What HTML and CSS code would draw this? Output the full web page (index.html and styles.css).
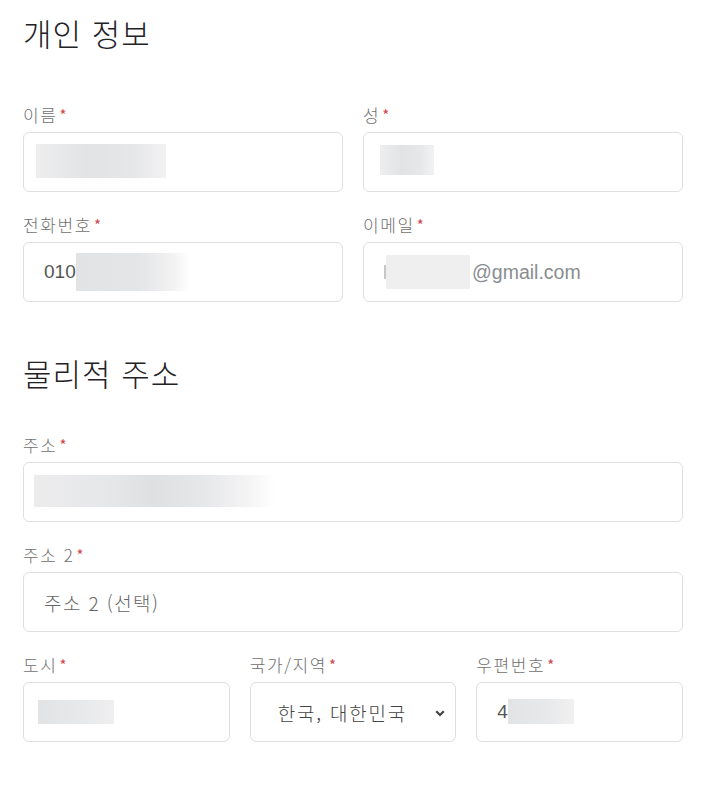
FILE: index.html
```html
<!DOCTYPE html>
<html lang="ko">
<head>
    <meta charset="UTF-8">
    <title>개인 정보</title>
    <link rel="stylesheet" href="styles.css">
</head>
<body>
    <div class="form">
        <h2 class="title first">개인 정보</h2>
        <div class="row two">
            <div class="field">
                <label>이름<span class="req">*</span></label>
                <div class="input"><span class="blur b-name"></span></div>
            </div>
            <div class="field">
                <label>성<span class="req">*</span></label>
                <div class="input"><span class="blur b-last"></span></div>
            </div>
        </div>
        <div class="row two">
            <div class="field">
                <label>전화번호<span class="req">*</span></label>
                <div class="input"><span class="val">010</span><span class="blur b-phone"></span></div>
            </div>
            <div class="field">
                <label>이메일<span class="req">*</span></label>
                <div class="input"><span class="mark"></span><span class="blur b-mail"></span><span class="val mail">@gmail.com</span></div>
            </div>
        </div>

        <h2 class="title second">물리적 주소</h2>
        <div class="row">
            <div class="field">
                <label>주소<span class="req">*</span></label>
                <div class="input in-addr"><span class="blur b-addr"></span></div>
            </div>
        </div>
        <div class="row">
            <div class="field">
                <label>주소 2<span class="req">*</span></label>
                <div class="input"><span class="ph">주소 2 (선택)</span></div>
            </div>
        </div>
        <div class="row three">
            <div class="field">
                <label>도시<span class="req">*</span></label>
                <div class="input in-city"><span class="blur b-city"></span></div>
            </div>
            <div class="field">
                <label>국가/지역<span class="req">*</span></label>
                <div class="input select">
                    <span class="sel-text">한국, 대한민국</span>
                    <svg class="chev" width="10" height="7" viewBox="0 0 10 7"><path d="M1.2 1.2 L5 5 L8.8 1.2" fill="none" stroke="#444" stroke-width="2.2"/></svg>
                </div>
            </div>
            <div class="field">
                <label>우편번호<span class="req">*</span></label>
                <div class="input"><span class="val">4</span><span class="blur b-zip"></span></div>
            </div>
        </div>
    </div>
</body>
</html>
```

FILE: styles.css
```css
* {
    margin: 0;
    padding: 0;
    box-sizing: border-box;
}
body {
    background: #ffffff;
    font-family: "Noto Sans CJK KR", "Liberation Sans", sans-serif;
    color: #222222;
}
.form {
    width: 660px;
    margin-left: 23px;
    padding-top: 14px;
}
.title {
    font-size: 31px;
    font-weight: 300;
    line-height: 38px;
    letter-spacing: 1px;
    color: #1f2226;
}
.title.first {
    margin-bottom: 50px;
}
.title.second {
    margin-top: 52px;
    margin-bottom: 40px;
}
.row {
    display: grid;
    grid-template-columns: 1fr;
    gap: 20px;
    margin-bottom: 20px;
}
.row.two {
    grid-template-columns: 1fr 1fr;
}
.row.three {
    grid-template-columns: 1fr 1fr 1fr;
}
label {
    display: flex;
    align-items: center;
    height: 24px;
    font-size: 17px;
    font-weight: 300;
    letter-spacing: 1.6px;
    color: #707070;
    margin-bottom: 6px;
}
.req {
    color: #d0464a;
    margin-left: 2px;
    font-size: 15px;
    font-weight: 400;
    line-height: 1;
}
.input {
    height: 60px;
    border: 1px solid #dedfe2;
    border-radius: 6px;
    padding: 0 20px;
    display: flex;
    align-items: center;
    font-family: "Liberation Sans", "Noto Sans CJK KR", sans-serif;
    font-size: 19px;
    color: #555555;
    background: #ffffff;
}
.val.mail {
    color: #8a8d91;
    font-size: 19.5px;
}
.ph {
    font-family: "Noto Sans CJK KR", sans-serif;
    font-size: 19px;
    font-weight: 300;
    letter-spacing: 1.4px;
    color: #666666;
}
.blur {
    display: block;
    background: linear-gradient(90deg, #eeeeef 0%, #e2e3e5 40%, #e6e7e9 75%, #f2f2f3 100%);
}
.b-name {
    width: 130px;
    height: 34px;
    margin-left: -8px;
    margin-top: -3px;
}
.b-last {
    width: 54px;
    height: 30px;
    margin-left: -4px;
    margin-top: -4px;
}
.b-phone {
    width: 114px;
    height: 38px;
    background: linear-gradient(90deg, #e2e3e5 0%, #e4e5e7 55%, #f2f2f3 85%, #ffffff 100%);
}
.mark {
    display: block;
    width: 2px;
    height: 14px;
    background: #c8c8c8;
}
.b-mail {
    width: 84px;
    height: 34px;
    background: #efeff0;
    margin-right: 2px;
}
.in-addr {
    padding-left: 10px;
}
.b-addr {
    width: 241px;
    height: 32px;
    margin-top: -2px;
    background: linear-gradient(90deg, #ececed 0%, #e6e7e9 30%, #dfe0e2 50%, #e6e7e9 70%, #f3f3f4 88%, #ffffff 100%);
}
.in-city {
    padding-left: 14px;
}
.b-city {
    width: 76px;
    height: 24px;
    background: linear-gradient(90deg, #e2e3e5 0%, #e8e9ea 60%, #efeff0 100%);
}
.b-zip {
    width: 66px;
    height: 25px;
    margin-top: -2px;
    background: linear-gradient(90deg, #e2e3e5 0%, #e8e9ea 60%, #f0f0f1 100%);
}
.select {
    padding: 0 10px 0 27px;
    justify-content: space-between;
}
.sel-text {
    font-family: "Noto Sans CJK KR", sans-serif;
    font-size: 19px;
    font-weight: 300;
    letter-spacing: 1.8px;
    color: #444444;
}
.chev {
    display: block;
    margin-top: 2px;
}
```
